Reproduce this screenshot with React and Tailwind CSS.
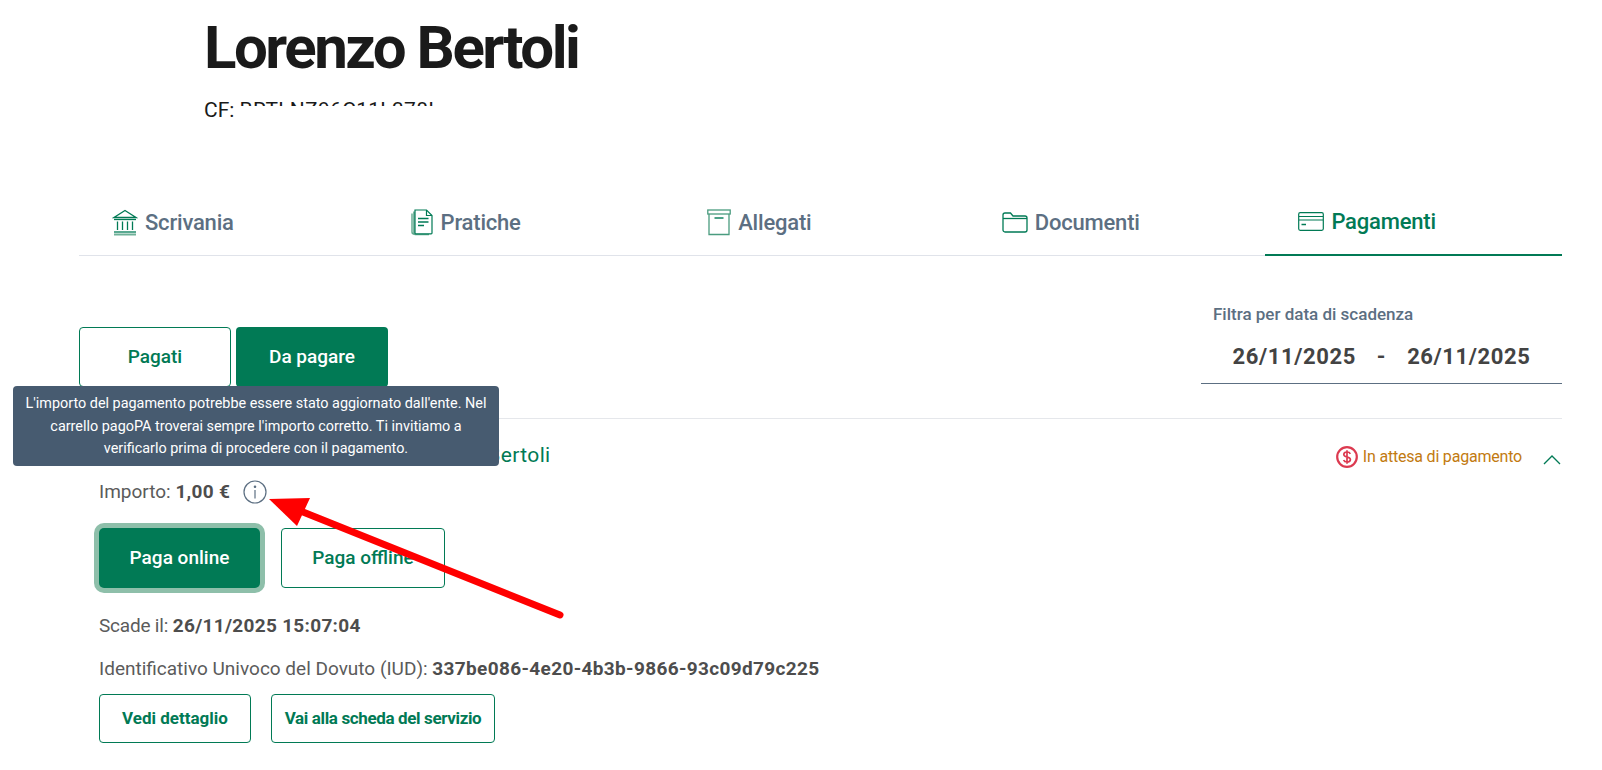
import React from "react";

const BankIcon = () => (
  <svg width="26" height="27" viewBox="0 0 26 27" fill="none" stroke="#017a55" strokeWidth="1.3">
    <path d="M13 1.5 L24 8.5 H2 Z" />
    <path d="M2 10.5H24" />
    <path d="M5.5 12.5V21M10.5 12.5V21M15.5 12.5V21M20.5 12.5V21" />
    <path d="M2 23H24" />
    <path d="M2 25.5H24" strokeWidth="2" stroke="#6fb199" />
  </svg>
);

const DocIcon = () => (
  <svg className="ml-[2px] mr-[1px]" width="22" height="27" viewBox="0 0 22 27" fill="none" stroke="#017a55" strokeWidth="1.2">
    <path d="M3 2.5V24.5a1 1 0 0 0 1 1H18" stroke="#5ea88d" strokeWidth="1.6" />
    <path d="M1 4.5V23a2 2 0 0 0 2 2" stroke="#5ea88d" strokeWidth="1.4" />
    <path d="M4 1H15.5L21 6.5V24a.8.8 0 0 1-.8.8H4.8A.8.8 0 0 1 4 24Z" fill="#fff" />
    <path d="M15.5 1V6.5H21" />
    <path d="M7 9.5H17.5M7 13H17.5M7 16.5H13" strokeWidth="1.4" />
  </svg>
);

const BoxIcon = () => (
  <svg className="ml-[2px]" width="24" height="27" viewBox="0 0 24 27" fill="none" stroke="#017a55" strokeWidth="1.3">
    <rect x="0.8" y="1" width="22.4" height="4" stroke="#4a9c7f" />
    <path d="M2 5V25.5H22V5" stroke="#4a9c7f" />
    <path d="M7.5 9H16.5" strokeWidth="1.4" />
  </svg>
);

const FolderIcon = () => (
  <svg width="26" height="21" viewBox="0 0 26 21" fill="none" stroke="#017a55" strokeWidth="1.3">
    <path d="M1 3a2 2 0 0 1 2-2H8.5L11 4H23a2 2 0 0 1 2 2V18a2 2 0 0 1-2 2H3a2 2 0 0 1-2-2Z" />
    <path d="M1 6.5H25" />
  </svg>
);

const CardIcon = () => (
  <svg width="26" height="19" viewBox="0 0 26 19" fill="none" stroke="#017a55" strokeWidth="1.2">
    <rect x="0.7" y="0.7" width="24.6" height="17.6" rx="1.5" />
    <path d="M1 4.5H25M1 8H25" />
    <path d="M3.5 12.5H8" strokeWidth="1.5" />
  </svg>
);

const tabs = [
  { label: "Scrivania", icon: <BankIcon /> },
  { label: "Pratiche", icon: <DocIcon /> },
  { label: "Allegati", icon: <BoxIcon /> },
  { label: "Documenti", icon: <FolderIcon /> },
  { label: "Pagamenti", icon: <CardIcon />, active: true },
];

export default function App() {
  return (
    <div className="relative w-[1602px] h-[770px] overflow-hidden bg-white font-['Roboto',sans-serif]">
      {/* header */}
      <div className="pl-[204px] pt-[11px]">
        <h1 className="text-[60px] leading-[74px] font-bold text-[#1a1a1a] tracking-[-2.5px]">Lorenzo Bertoli</h1>
        <div className="relative mt-[11px] text-[21px] leading-[28px] text-[#1a1a1a]">
          CF: <span className="tracking-[0.3px]">BRTLNZ96C11L378I</span>
          <div className="absolute left-[34px] top-[10px] w-[204px] h-[20px] bg-white"></div>
        </div>
      </div>

      {/* tabs */}
      <div className="ml-[79px] mt-[65px] w-[1483px] grid grid-cols-5 border-b border-[#e0e3ea]">
        {tabs.map((t) => (
          <div
            key={t.label}
            className={`h-[67px] pl-[33px] flex items-center gap-[7px] text-[22px] font-medium tracking-[-0.2px] -mb-px ${
              t.active ? "text-[#017a55] border-b-2 border-[#017a55]" : "text-[#5c6f82]"
            }`}
          >
            {t.icon}
            {t.label}
          </div>
        ))}
      </div>

      {/* filtri */}
      <div className="ml-[79px] w-[1483px] flex justify-between mt-[47px]">
        <div className="flex gap-[5px] mt-[24px]">
          <button className="w-[152px] h-[60px] rounded border border-[#017a55] text-[#017a55] text-[19px] font-medium">
            Pagati
          </button>
          <button className="w-[152px] h-[60px] rounded bg-[#017a55] text-white text-[19px] font-medium">
            Da pagare
          </button>
        </div>
        <div className="w-[361px]">
          <div className="pl-[12px] text-[17px] leading-[22px] font-medium text-[#5c6f82]">
            Filtra per data di scadenza
          </div>
          <div className="mt-[8px] h-[51px] pb-[4px] border-b border-[#5c6f82] flex items-center justify-center gap-[21px] text-[22px] font-bold text-[#434343] tracking-[0.6px]">
            <span>26/11/2025</span>
            <span>-</span>
            <span>26/11/2025</span>
          </div>
        </div>
      </div>

      {/* riga pagamento */}
      <div className="ml-[79px] w-[1483px] mt-[31px] border-t border-[#e5e7eb] pt-[23px] pl-[20px]">
        <div className="flex items-center justify-between h-[28px]">
          <span className="text-[21px] text-[#017a55] tracking-[0.37px]">Pagamento per servizio prova - Lorenzo Bertoli</span>
          <div className="flex items-center mt-[2px]">
            <svg width="22" height="22" viewBox="0 0 22 22" fill="none" stroke="#dc3a50" strokeWidth="2.2">
              <circle cx="11" cy="11" r="9.8" />
              <path d="M14.3 7.8c-.5-1.2-1.8-1.8-3.3-1.8-1.8 0-3.2.9-3.2 2.5 0 3.3 6.6 1.7 6.6 5 0 1.6-1.5 2.5-3.4 2.5-1.6 0-2.9-.7-3.4-2M11 4.3v13.4" strokeWidth="1.7" />
            </svg>
            <span className="ml-[5px] text-[16px] text-[#c27a10] tracking-[-0.2px]">In attesa di pagamento</span>
            <svg className="ml-[21px] mr-[1px] mt-[5px]" width="18" height="10" viewBox="0 0 18 10" fill="none" stroke="#017a55" strokeWidth="1.3">
              <path d="M1 9L9 1L17 9" />
            </svg>
          </div>
        </div>

        <div className="mt-[9px] flex items-center h-[26px] text-[19px] text-[#5b5b5b]">
          Importo:&nbsp;<b className="font-bold text-[#4d4d4d] tracking-[0.3px]">1,00 €</b>
          <svg className="ml-[13px]" width="24" height="24" viewBox="0 0 24 24" fill="none" stroke="#5c6f82" strokeWidth="1.2">
            <circle cx="12" cy="12" r="11" />
            <path d="M12 10V18.5" />
            <circle cx="12" cy="6.8" r="0.7" fill="#5c6f82" />
          </svg>
        </div>

        <div className="mt-[23px] flex gap-[21px]">
          <button className="w-[161px] h-[60px] rounded-[5px] bg-[#017a55] text-white text-[19px] font-medium ring-[5px] ring-[#8ebfaa]">
            Paga online
          </button>
          <button className="w-[164px] h-[60px] rounded border border-[#017a55] text-[#017a55] text-[19px] font-medium">
            Paga offline
          </button>
        </div>

        <div className="mt-[25px] h-[26px] leading-[26px] text-[19px] text-[#5b5b5b]">
          <span className="tracking-[-0.2px]">Scade il:</span> <b className="font-bold text-[#4d4d4d] tracking-[0.3px]">26/11/2025 15:07:04</b>
        </div>
        <div className="mt-[17px] h-[26px] leading-[26px] text-[19px] text-[#5b5b5b]">
          Identificativo Univoco del Dovuto (IUD): <b className="font-bold text-[#4d4d4d] tracking-[0.35px]">337be086-4e20-4b3b-9866-93c09d79c225</b>
        </div>

        <div className="mt-[12px] flex gap-[20px]">
          <button className="w-[152px] h-[49px] rounded border border-[#017a55] text-[#017a55] text-[17px] font-bold">
            Vedi dettaglio
          </button>
          <button className="w-[224px] h-[49px] rounded border border-[#017a55] text-[#017a55] text-[17px] font-bold tracking-[-0.36px]">
            Vai alla scheda del servizio
          </button>
        </div>
      </div>

      {/* tooltip */}
      <div className="absolute left-[13px] top-[386px] w-[486px] h-[80px] rounded bg-[#475b70] text-white text-[14.4px] leading-[22.5px] text-center pt-[7px]">
        L'importo del pagamento potrebbe essere stato aggiornato dall'ente. Nel
        <br />
        carrello pagoPA troverai sempre l'importo corretto. Ti invitiamo a
        <br />
        verificarlo prima di procedere con il pagamento.
      </div>

      {/* freccia rossa */}
      <svg className="absolute left-0 top-0 pointer-events-none" width="1602" height="770" fill="none">
        <path d="M303 512L560 615" stroke="#ff0000" strokeWidth="7" strokeLinecap="round" />
        <path d="M269 499L310 498L297 526Z" fill="#ff0000" />
      </svg>
    </div>
  );
}
